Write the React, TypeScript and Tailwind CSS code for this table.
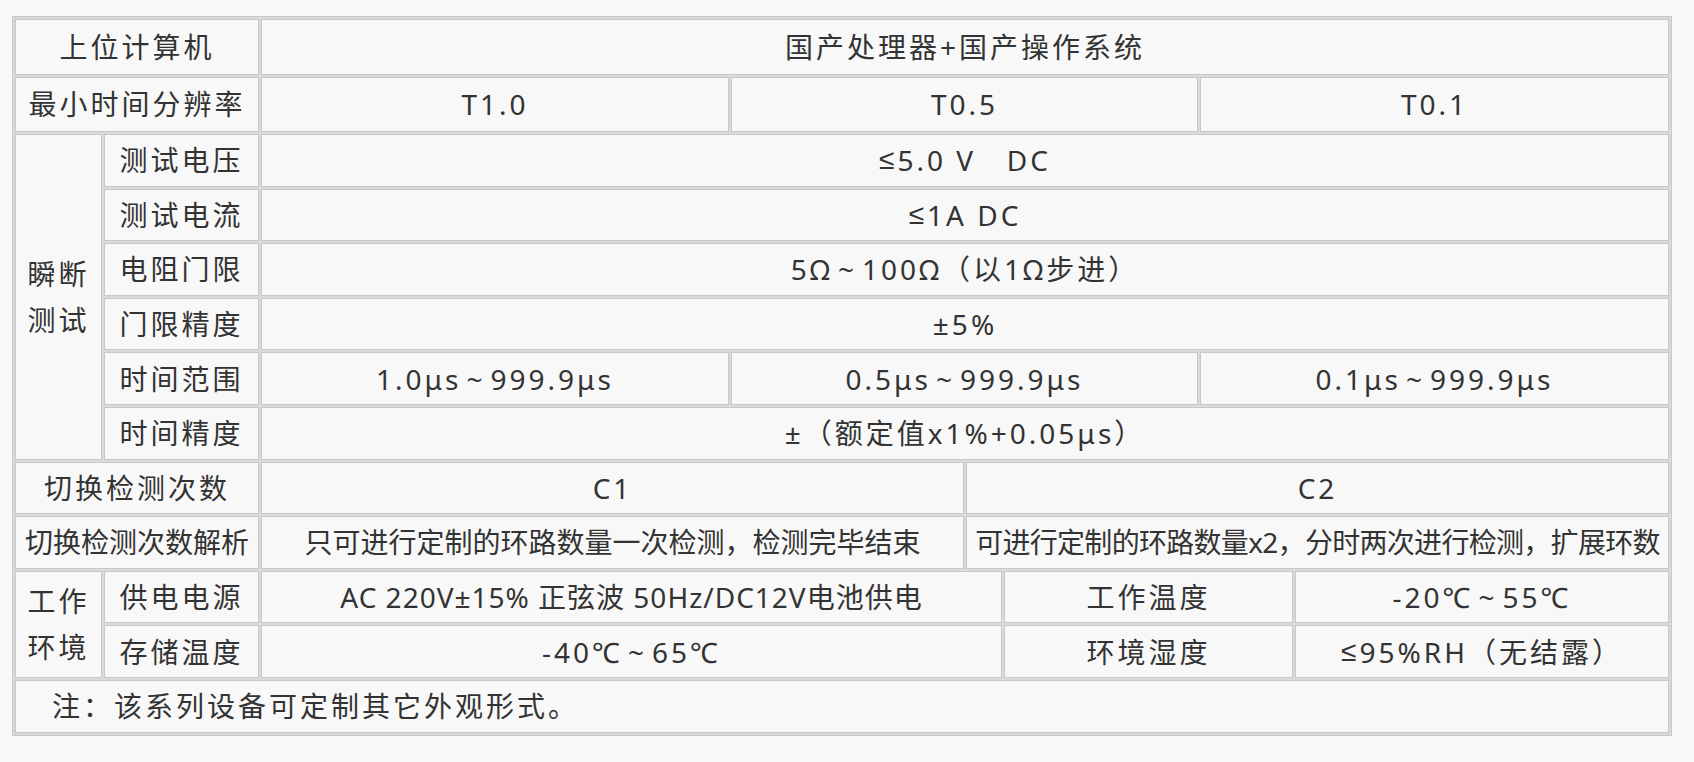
import React from 'react';

type CellProps = {
  children?: React.ReactNode;
  className?: string;
};

function Cell({ children, className = '' }: CellProps) {
  return (
    <div
      className={`flex items-center justify-center border border-[#c8c8c8] bg-[#f8f8f8] whitespace-pre ${className}`}
    >
      {children}
    </div>
  );
}

// small halfwidth tilde with a bit of air around it
const Tilde = () => <span className="mx-[5px]">~</span>;
// latin ≤ (the CJK one is slanted)
const Le = () => <span className="font-['Liberation_Sans',sans-serif]">≤</span>;

export default function App() {
  return (
    <div className="min-h-screen bg-[#f8f8f8] pt-[16px] pl-[12px] font-['Noto_Sans','Noto_Sans_CJK_SC',sans-serif] text-[28px] tracking-[3px] text-[#333333] leading-none">
      <div className="grid w-[1660px] grid-cols-[87px_155px_468px_233px_36px_194px_93px_374px] grid-rows-[55.5px_55.5px_repeat(11,52.6px)] gap-[2px] border border-[#c8c8c8] bg-[#dadada] p-[2px]">
        {/* 上位计算机 */}
        <Cell className="col-span-2">上位计算机</Cell>
        <Cell className="col-span-6">国产处理器+国产操作系统</Cell>

        {/* 分辨率 */}
        <Cell className="col-span-2">最小时间分辨率</Cell>
        <Cell>T1.0</Cell>
        <Cell className="col-span-3">T0.5</Cell>
        <Cell className="col-span-2">T0.1</Cell>

        {/* 瞬断测试 */}
        <Cell className="row-span-6 col-start-1 flex-col leading-[46px]">
          <span>瞬断</span>
          <span>测试</span>
        </Cell>
        <Cell className="col-start-2">测试电压</Cell>
        <Cell className="col-span-6">
          <Le />5.0 V   DC
        </Cell>

        <Cell className="col-start-2">测试电流</Cell>
        <Cell className="col-span-6">
          <Le />1A DC
        </Cell>

        <Cell className="col-start-2">电阻门限</Cell>
        <Cell className="col-span-6">
          5Ω<Tilde />100Ω（以1Ω步进）
        </Cell>

        <Cell className="col-start-2">门限精度</Cell>
        <Cell className="col-span-6">±5%</Cell>

        <Cell className="col-start-2">时间范围</Cell>
        <Cell>
          1.0μs<Tilde />999.9μs
        </Cell>
        <Cell className="col-span-3">
          0.5μs<Tilde />999.9μs
        </Cell>
        <Cell className="col-span-2">
          0.1μs<Tilde />999.9μs
        </Cell>

        <Cell className="col-start-2">时间精度</Cell>
        <Cell className="col-span-6">±（额定值x1%+0.05μs）</Cell>

        {/* 切换检测 */}
        <Cell className="col-span-2 col-start-1">切换检测次数</Cell>
        <Cell className="col-span-2">C1</Cell>
        <Cell className="col-span-4">C2</Cell>

        <Cell className="col-span-2 col-start-1 tracking-[0px]">切换检测次数解析</Cell>
        <Cell className="col-span-2 tracking-[0px]">只可进行定制的环路数量一次检测，检测完毕结束</Cell>
        <Cell className="col-span-4 tracking-[-0.7px]">可进行定制的环路数量x2，分时两次进行检测，扩展环数</Cell>

        {/* 工作环境 */}
        <Cell className="row-span-2 col-start-1 flex-col leading-[46px]">
          <span>工作</span>
          <span>环境</span>
        </Cell>
        <Cell className="col-start-2">供电电源</Cell>
        <Cell className="col-span-3 tracking-[1px]">AC 220V±15% 正弦波 50Hz/DC12V电池供电</Cell>
        <Cell className="col-span-2">工作温度</Cell>
        <Cell>
          -20℃<Tilde />55℃
        </Cell>

        <Cell className="col-start-2">存储温度</Cell>
        <Cell className="col-span-3">
          -40℃<Tilde />65℃
        </Cell>
        <Cell className="col-span-2">环境湿度</Cell>
        <Cell>
          <Le />95%RH（无结露）
        </Cell>

        {/* 注 */}
        <Cell className="col-span-8 col-start-1 justify-start pl-[36px]">注：该系列设备可定制其它外观形式。</Cell>
      </div>
    </div>
  );
}
